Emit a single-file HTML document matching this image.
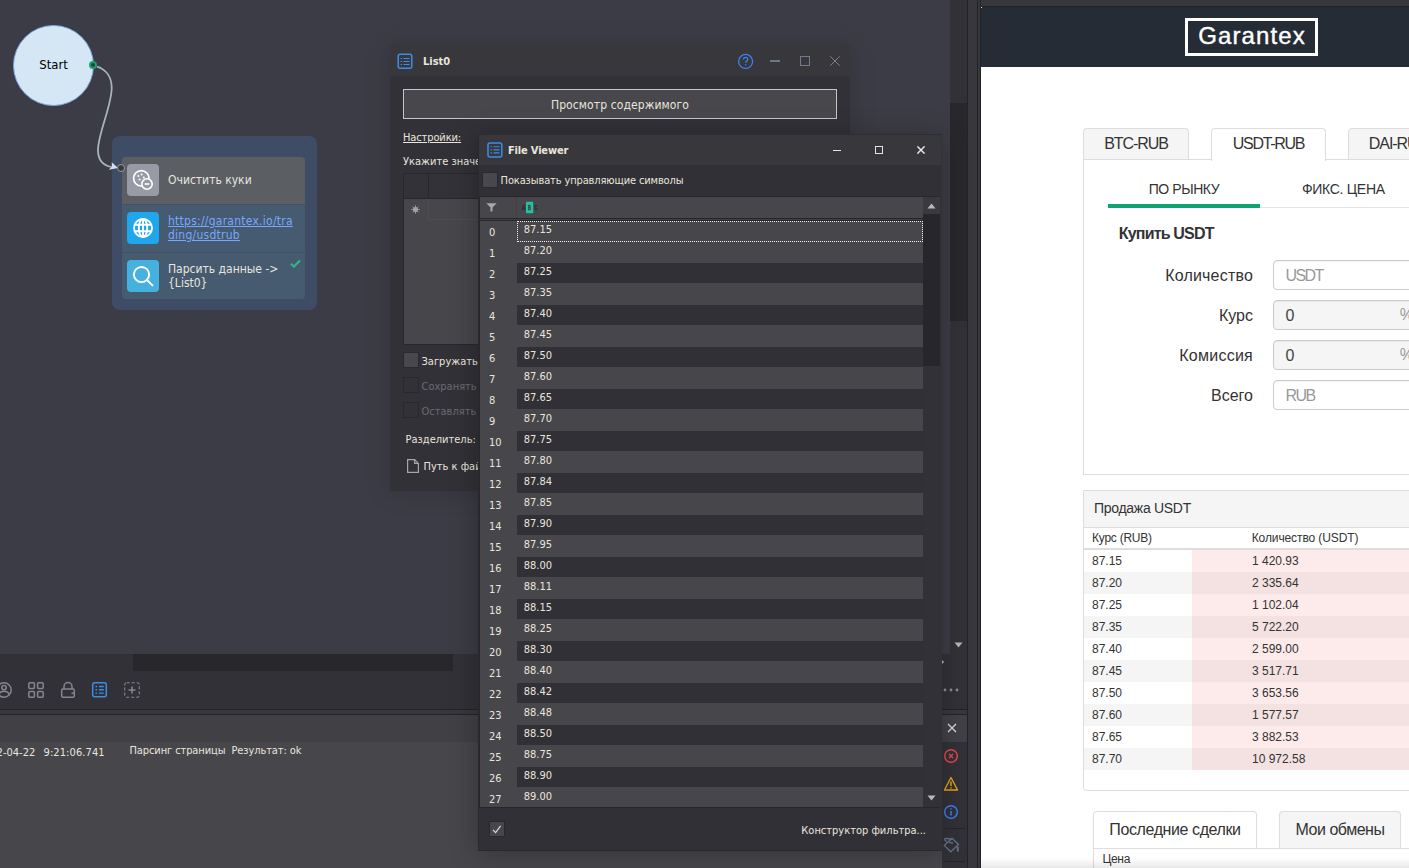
<!DOCTYPE html>
<html lang="ru"><head><meta charset="utf-8"><title>ProjectMaker</title>
<style>
*{box-sizing:border-box;margin:0;padding:0}
html,body{width:1409px;height:868px;overflow:hidden;background:#3c3c46}
body{position:relative;font-family:"DejaVu Sans Condensed","DejaVu Sans","Liberation Sans",sans-serif;font-stretch:condensed;font-size:11px;line-height:13px;color:#e9e5dd}
div,span,i,svg,a{position:absolute;display:block}
i{font-style:normal}
.t{white-space:nowrap}
/* workspace */
#start{left:13px;top:25px;width:81px;height:81px;border-radius:50%;background:#d5e6f5;border:1px solid #78a6dc;color:#000;font-size:13px;line-height:77px;text-align:center}
#gdot{left:89px;top:61px;width:8px;height:8px;border-radius:50%;border:2px solid #19a06f;background:#3a3c44}
#grp{left:111.500px;top:136.200px;width:205px;height:173.800px;border-radius:8px;background:#3e4d65}
#blk{left:122px;top:157px;width:183px;height:142px;border-radius:4px;overflow:hidden;background:#40526a}
#blk .row{left:0;width:183px;background:#465a70}
#blk .ic{left:5px;top:7px;width:32px;height:32px;border-radius:4px}
#blk .tx{left:46px;font-size:12px;line-height:13.5px;white-space:nowrap}
#port{left:117px;top:164px;width:8px;height:8px;border-radius:50%;border:1.5px solid #9c9c9c;background:#38383f}
/* bottom bars */
#tb{left:0;top:654px;width:967px;height:55px;background:#323137}
#hth{left:133px;top:654px;width:320px;height:17px;background:#28272c}
#vsb{left:950px;top:0;width:17px;height:654px;background:#323137}
#vth{left:950px;top:103px;width:17px;height:218px;background:#28272c}
#log{left:0;top:715px;width:967px;height:153px;background:#47464b}
#logh{left:0;top:0;width:942px;height:27px;background:#414045}
/* windows */
.win{background:#323137;box-shadow:0 1px 24px rgba(0,0,0,.15)}
.win .tbar{left:0;top:0;width:100%;height:31px;background:#38373c}
.win .ttl{font-weight:bold;font-size:11px;white-space:nowrap}
.cb{width:16px;height:16px;background:#48474c;border:1px solid #2a292e}
.cb.d{background:#323137;border-color:#29282d}
.dim{color:#6c6b72}
/* FV rows */
#rows{left:1px;top:87px;width:443px;height:586px;overflow:hidden;background:#47464b}
#rows .r{left:0;width:443px;height:21px}
#rows .r .n{left:9px;top:5px;white-space:nowrap}
#rows .r .c{left:37px;top:0;width:406px;height:20px;background:#313036;padding:2px 0 0 6.700px;white-space:nowrap}
#rows .r.l .c{background:#47464b}
#rows .r.f .c{height:21px;outline:1px dotted #f0f0f0;outline-offset:-1px}
/* browser */
#br{left:981px;top:7px;width:428px;height:861px;background:#fff;overflow:hidden;font-family:"Liberation Sans",sans-serif;font-stretch:normal;color:#333}
#br .tab{top:121px;height:32px;border:1px solid #ddd;border-bottom:none;border-radius:4px 4px 0 0;background:#f5f5f5;font-size:16px;line-height:30px;text-align:center;white-space:nowrap}
#br .lab{font-size:16px;line-height:20px;white-space:nowrap;text-align:right;right:156px}
#br .inp{left:292px;width:160px;height:30px;border:1px solid #ccc;border-radius:4px;background:#fff;font-size:16px;line-height:28px;padding-left:11.600px;padding-top:1px;white-space:nowrap;color:#999;box-shadow:inset 0 1px 1px rgba(0,0,0,.06)}
#br .inp.dis{background:#f5f5f5;color:#444}
#ob{left:0;top:36px;width:330px;height:260px;overflow:hidden}
#ob .or{left:0;width:330px;height:22px;background:#fff;font-size:12px;line-height:22px}
#ob .or.g{background:#f5f5f5}
#ob .or i{left:108px;top:0;width:222px;height:22px;background:rgba(235,70,70,.11)}
#ob .or .a{left:8px;top:0;white-space:nowrap}
#ob .or .b{left:168px;top:0;white-space:nowrap}
#w2{box-shadow:-2px 3px 26px rgba(0,0,0,.27)}

</style></head>
<body>
<!-- ===== workspace ===== -->
<div id="start">Start</div>
<div id="gdot"></div>
<div id="grp"></div>
<div id="blk">
  <div class="row" style="top:0;height:47px;background:#5b5f63">
    <div class="ic" style="background:#989ba5"><svg style="left:0;top:0" width="32" height="32" viewBox="0 0 32 32"><circle cx="14.300" cy="14.300" r="7.700" fill="none" stroke="#fff" stroke-width="1.700"/><circle cx="11.3" cy="12" r="1" fill="#fff"/><circle cx="14.6" cy="10.6" r="1" fill="#fff"/><circle cx="12.6" cy="15.6" r="1" fill="#fff"/><circle cx="16.8" cy="13.4" r="1" fill="#fff"/><circle cx="20" cy="20" r="5.2" fill="#989ba5" stroke="#fff" stroke-width="1.6"/><rect x="17.6" y="19.2" width="4.8" height="1.6" fill="#fff"/></svg></div>
    <span class="tx" style="top:17.200px">Очистить куки</span>
  </div>
  <div class="row" style="top:48px;height:47px">
    <div class="ic" style="background:#1fa6ec"><svg style="left:0;top:0" width="32" height="32" viewBox="0 0 32 32" fill="none" stroke="#fff" stroke-width="1.900"><circle cx="16" cy="16" r="9"/><ellipse cx="16" cy="16" rx="4.200" ry="9"/><path d="M7.600 12.800h16.800M7.600 19.200h16.800M16 7v18"/></svg></div>
    <span class="tx" style="top:10.100px;color:#76a8ff;text-decoration:underline;letter-spacing:.25px">https://garantex.io/tra<br>ding/usdtrub</span>
  </div>
  <div class="row" style="top:96px;height:46px">
    <div class="ic" style="background:#45b1de"><svg style="left:0;top:0" width="32" height="32" viewBox="0 0 32 32" fill="none" stroke="#fff" stroke-width="2" stroke-linecap="round"><circle cx="14.500" cy="14.500" r="7.600"/><path d="M20.200 20.200L25.400 25.400"/></svg></div>
    <span class="tx" style="top:10.100px">Парсить данные -&gt;<br>{List0}</span>
    <svg style="left:168px;top:6px" width="11" height="9" viewBox="0 0 11 9"><path d="M1 4.8L3.9 7.6L10 1.4" fill="none" stroke="#2fb582" stroke-width="2.2"/></svg>
  </div>
</div>
<svg id="wire" style="left:80px;top:50px" width="60" height="130" viewBox="80 50 60 130">
<path d="M97 66.600 C106 69.500 111.800 77 111.700 88 C111.600 106 98 134 98 150 C98 160 103 165.500 111.500 167" fill="none" stroke="#aab4bf" stroke-width="1.750"/>
<path d="M111.800 162.300 L118 168 L108.800 169.800 L111.800 166.600 Z" fill="#cfe1f1"/>
</svg>
<div id="port"></div>

<div id="vsb"></div><div id="vth"></div>
<svg style="left:954px;top:642px" width="9" height="6" viewBox="0 0 9 6"><path d="M0.5 0.5h8L4.5 5.5z" fill="#b4b4b8"/></svg>

<!-- ===== bottom toolbar ===== -->
<div id="tb"></div><div id="hth"></div>
<svg style="left:940px;top:658px" width="5" height="8" viewBox="0 0 5 8"><path d="M0.5 0.8L4.2 4L0.5 7.2z" fill="#b4b4b8"/></svg>
<svg id="tbi" style="left:0;top:680px" width="150" height="20" viewBox="0 0 150 20" fill="none" stroke="#85858f" stroke-width="1.5">
  <circle cx="4" cy="10" r="7.2"/><circle cx="4" cy="7.6" r="2.2"/><path d="M-1.5 15c1-3 3-3.8 5.5-3.8s4.500.8 5.500 3.800"/>
  <rect x="28.800" y="2.800" width="5.600" height="5.600" rx="1"/><rect x="37.600" y="2.800" width="5.600" height="5.600" rx="1"/><rect x="28.800" y="11.600" width="5.600" height="5.600" rx="1"/><rect x="37.600" y="11.600" width="5.600" height="5.600" rx="1"/>
  <path d="M64 9V6.500a4 4 0 0 1 8 0V9"/><rect x="61.700" y="9" width="12.600" height="8.300" rx="1.200"/><path d="M71.500 13.200h2.800"/>
  <g stroke="#3b8de8"><rect x="92.700" y="2.700" width="13.600" height="14.100" rx="2"/><path d="M95.500 6.500h1.600M99 6.500h4.800M95.500 9.800h1.600M99 9.800h4.800M95.500 13.100h1.600M99 13.100h4.800" stroke-width="1.400"/></g>
  <rect x="124.700" y="2.700" width="14.600" height="14.600" rx="2" stroke-dasharray="3 2" stroke-width="1.100"/><path d="M128.500 10h7M132 6.500v7" stroke-width="1.600"/>
</svg>
<svg style="left:943px;top:688px" width="16" height="4" viewBox="0 0 16 4" fill="#8c8c9a"><circle cx="2" cy="2" r="1.4"/><circle cx="8" cy="2" r="1.4"/><circle cx="14" cy="2" r="1.4"/></svg>
<div style="left:0;top:709px;width:967px;height:1px;background:#242328"></div>
<div style="left:0;top:710px;width:967px;height:4px;background:#38373c"></div>
<div style="left:0;top:714px;width:967px;height:1px;background:#242328"></div>

<!-- ===== log panel ===== -->
<div id="log">
  <div id="logh"></div>
  <span class="t" style="left:-3.400px;top:30.500px">2-04-22</span><span class="t" style="left:43.500px;top:30.500px;letter-spacing:.09px">9:21:06.741</span>
  <span class="t" style="left:129.500px;top:29.300px;letter-spacing:-.1px">Парсинг страницы&nbsp; Результат: ok</span>
  <div style="left:942px;top:0;width:25px;height:153px;background:#323137"></div>
  <div style="left:942px;top:0;width:25px;height:27px;background:#414046"></div>
  <svg style="left:942px;top:0" width="25" height="153" viewBox="0 0 25 153" fill="none" stroke-width="1.400">
    <path d="M6 9l8 8M14 9l-8 8" stroke="#d8d8dc" stroke-width="1.300"/>
    <g stroke="#e5484d"><circle cx="9" cy="41" r="6.300"/><path d="M7 39l4 4M11 39l-4 4"/></g>
    <g stroke="#e8a317"><path d="M9 62.500L15.500 75h-13z" stroke-linejoin="round"/><path d="M9 66.500v4.500M9 72.200v1.300" stroke-width="1.500"/></g>
    <g stroke="#3b82f6"><circle cx="9" cy="97" r="6.300"/><path d="M9 96v4.500M9 93.200v1.400" stroke-width="1.500"/></g>
    <path d="M2 113.500h21" stroke="#26252a" stroke-width="1"/>
    <g stroke="#66728c" stroke-width="1.300" stroke-linejoin="round" stroke-linecap="round"><path d="M10 123.300L16.600 129.500L8.800 136.700L2.200 130.400z"/><path d="M4.500 126.500C1.500 124.800 2.200 123.300 5 123.500C6.500 123.600 8 124 9.300 124.600"/><path d="M7.500 127.300L10.400 128"/><path d="M15.800 132.500v3.300" stroke-width="1.900"/></g>
    <path d="M2 146.500h21" stroke="#26252a" stroke-width="1"/>
  </svg>
</div>

<!-- ===== right strip ===== -->
<div style="left:967px;top:0;width:14px;height:868px;background:#38373c"></div>
<div style="left:967px;top:0;width:1px;height:868px;background:#232227"></div>
<div style="left:977px;top:0;width:1px;height:868px;background:#232227"></div>
<div style="left:980px;top:0;width:1px;height:868px;background:#232227"></div>
<div style="left:981px;top:0;width:428px;height:6px;background:#38373c"></div>
<div style="left:981px;top:6px;width:428px;height:1px;background:#232227"></div>

<!-- ===== browser ===== -->
<div id="br">
  <div style="left:0;top:0;width:428px;height:59.500px;background:#252c35"></div>
  <div style="left:204px;top:11px;width:133px;height:38px;border:3px solid #fff;color:#fff;font-size:24px;line-height:30px;text-align:center;letter-spacing:1.100px;padding-left:1px;white-space:nowrap;-webkit-text-stroke:.4px #fff">Garantex</div>
  <!-- panel 1 -->
  <div style="left:102px;top:152px;width:400px;height:316px;border:1px solid #ddd;background:#fff"></div>
  <div class="tab" style="left:102px;width:106px;height:31px;letter-spacing:-1.070px">BTC-RUB</div>
  <div class="tab" style="left:230px;width:115px;height:33px;background:#fff;letter-spacing:-1.280px">USDT-RUB</div>
  <div class="tab" style="left:367px;width:100px;height:31px;letter-spacing:-1.070px">DAI-RUB</div>
  <div style="left:127px;top:200px;width:320px;height:1px;background:#e3e3e3"></div>
  <div style="left:127px;top:197px;width:152px;height:4px;background:#0ea371"></div>
  <span class="t" style="left:167.700px;top:172.300px;font-size:14px;line-height:20px;letter-spacing:-.42px">ПО РЫНКУ</span>
  <span class="t" style="left:321px;top:172.300px;font-size:14px;line-height:20px;letter-spacing:-.3px">ФИКС. ЦЕНА</span>
  <span class="t" style="left:137.800px;top:216.600px;font-size:16px;line-height:20px;font-weight:bold;letter-spacing:-.82px">Купить USDT</span>
  <span class="lab" style="top:259px;letter-spacing:.19px">Количество</span>
  <span class="lab" style="top:299px">Курс</span>
  <span class="lab" style="top:339px;letter-spacing:.24px">Комиссия</span>
  <span class="lab" style="top:379px">Всего</span>
  <div class="inp" style="top:253px;letter-spacing:-1.600px">USDT</div>
  <div class="inp dis" style="top:293px">0</div>
  <div class="inp dis" style="top:333px">0</div>
  <div class="inp" style="top:373px;letter-spacing:-1.600px">RUB</div>
  <span class="t" style="left:418.800px;top:298px;font-size:16px;line-height:20px;color:#999">%</span>
  <span class="t" style="left:418.800px;top:338px;font-size:16px;line-height:20px;color:#999">%</span>
  <!-- panel 2 -->
  <div style="left:102px;top:483px;width:400px;height:300.500px;border:1px solid #ddd;border-radius:0 0 4px 4px;background:#fff;overflow:hidden">
    <div style="left:0;top:0;width:400px;height:37px;background:#f5f5f5;border-bottom:1px solid #ddd"></div>
    <span class="t" style="left:10px;top:7.200px;font-size:14px;line-height:20px;letter-spacing:-.29px">Продажа USDT</span>
    <span class="t" style="left:8px;top:39px;font-size:12px;line-height:16px;letter-spacing:-.24px">Курс (RUB)</span>
    <span class="t" style="left:167.700px;top:39px;font-size:12px;line-height:16px;letter-spacing:-.1px">Количество (USDT)</span>
    <div style="left:0;top:56.500px;width:400px;height:2px;background:#ddd"></div>
    <div id="ob" style="top:58.500px">
<div class="or" style="top:0px"><span class="a">87.15</span><i></i><span class="b">1 420.93</span></div>
<div class="or g" style="top:22px"><span class="a">87.20</span><i></i><span class="b">2 335.64</span></div>
<div class="or" style="top:44px"><span class="a">87.25</span><i></i><span class="b">1 102.04</span></div>
<div class="or g" style="top:66px"><span class="a">87.35</span><i></i><span class="b">5 722.20</span></div>
<div class="or" style="top:88px"><span class="a">87.40</span><i></i><span class="b">2 599.00</span></div>
<div class="or g" style="top:110px"><span class="a">87.45</span><i></i><span class="b">3 517.71</span></div>
<div class="or" style="top:132px"><span class="a">87.50</span><i></i><span class="b">3 653.56</span></div>
<div class="or g" style="top:154px"><span class="a">87.60</span><i></i><span class="b">1 577.57</span></div>
<div class="or" style="top:176px"><span class="a">87.65</span><i></i><span class="b">3 882.53</span></div>
<div class="or g" style="top:198px"><span class="a">87.70</span><i></i><span class="b">10 972.58</span></div>
    </div>
  </div>
  <!-- bottom tabs -->
  <div style="left:112px;top:841px;width:400px;height:40px;border:1px solid #ddd;background:#fff"></div>
  <div class="tab" style="left:112px;top:804px;width:164px;height:37px;line-height:35px;background:#fff;letter-spacing:-.4px">Последние сделки</div>
  <div class="tab" style="left:298px;top:804px;width:122px;height:37px;line-height:35px;letter-spacing:-.47px">Мои обмены</div>
  <span class="t" style="left:121.500px;top:843.800px;font-size:12px;line-height:16px;letter-spacing:-.34px">Цена</span>
  <div style="left:0;top:851px;width:428px;height:10px;background:linear-gradient(rgba(0,0,0,0),rgba(0,0,0,.09))"></div>
</div>

<div style="left:981px;top:7px;width:1px;height:1px;background:#e6e6e6"></div>
<!-- ===== List0 window ===== -->
<div class="win" id="w1" style="left:390px;top:45px;width:460px;height:446px">
  <div class="tbar"></div>
  <svg style="left:7px;top:8px" width="16" height="16" viewBox="0 0 16 16" fill="none" stroke="#3b8de8" stroke-width="1.500"><rect x="1.200" y="1.200" width="13.600" height="14" rx="2"/><path d="M3.600 5.500h1.500M6.500 5.500h6M3.600 8.500h1.500M6.500 8.500h6M3.600 11.500h1.500M6.500 11.500h6" stroke-width="1.100"/></svg>
  <span class="ttl" style="left:33px;top:9.700px">List0</span>
  <svg style="left:347px;top:8px" width="17" height="17" viewBox="0 0 17 17" fill="none" stroke="#3b82f6" stroke-width="1.300"><circle cx="8.600" cy="8.400" r="7"/><path d="M6.400 6.600c0-1.400 1-2.200 2.200-2.200s2.200.8 2.200 2c0 1.600-2.100 1.700-2.100 3.400"/><path d="M8.700 11.300v1.300"/></svg>
  <div style="left:380px;top:15px;width:10px;height:2px;background:#6e768a"></div>
  <div style="left:410px;top:11px;width:10px;height:10px;border:1px solid #727a8f"></div>
  <svg style="left:440px;top:11px" width="10" height="10" viewBox="0 0 10 10"><path d="M0.300 0.300l9.400 9.400M9.700 0.300L0.300 9.700" stroke="#7b8397" stroke-width="1"/></svg>
  <div style="left:13px;top:44px;width:434px;height:30px;border:1px solid #c6c6c6;background:#48474c;font-size:12px;line-height:30px;text-align:center;letter-spacing:.1px">Просмотр содержимого</div>
  <span class="t" style="left:13px;top:86.200px;text-decoration:underline;letter-spacing:-.12px">Настройки:</span>
  <span class="t" style="left:13px;top:110.300px">Укажите значения</span>
  <div style="left:13px;top:128px;width:434px;height:172px;border:1px solid #28272c;background:#47464b">
    <div style="left:0;top:0;width:432px;height:25px;background:#333238;border-bottom:1px solid #28272c"></div>
    <div style="left:24px;top:0;width:1px;height:25px;background:#28272c"></div>
    <div style="left:24px;top:25px;width:408px;height:21px;border:1px solid #4d4c52;border-top:none;border-right:none"></div>
    <svg style="left:7px;top:31px" width="9" height="9" viewBox="0 0 9 9" stroke="#9c9ca1" stroke-width=".9"><path d="M4.500 0.200v8.600M0.200 4.500h8.600M1.600 1.600l5.800 5.800M7.400 1.600L1.600 7.400"/><circle cx="4.500" cy="4.500" r="2.500" fill="#a3a3a8" stroke="none"/></svg>
  </div>
  <div class="cb" style="left:13px;top:307px"></div><span class="t" style="left:31.500px;top:309.700px">Загружать</span>
  <div class="cb d" style="left:13px;top:332px"></div><span class="t dim" style="left:31.500px;top:335.200px">Сохранять</span>
  <div class="cb d" style="left:13px;top:357px"></div><span class="t dim" style="left:31.500px;top:360px">Оставлять</span>
  <span class="t" style="left:15.500px;top:388.200px">Разделитель:</span>
  <svg style="left:16px;top:413px" width="14" height="16" viewBox="0 0 14 16" fill="none" stroke="#a5a5aa" stroke-width="1.200"><path d="M1.600 1.600h7l3.800 3.800v9h-10.800z"/><path d="M8.600 1.600v3.800h3.800"/></svg>
  <span class="t" style="left:33.500px;top:415px">Путь к файлу</span>
</div>

<!-- ===== File Viewer window ===== -->
<div class="win" id="w2" style="left:479px;top:134px;width:463px;height:716px;background:#313036">
  <div class="tbar" style="left:-1px;width:464px"></div>

  <svg style="left:8px;top:8px" width="16" height="16" viewBox="0 0 16 16" fill="none" stroke="#3b8de8" stroke-width="1.500"><rect x="1" y="1" width="13.800" height="14" rx="2"/><path d="M3.600 4.800h1.500M6.500 4.800h6M3.600 7.900h1.500M6.500 7.900h6M3.600 10.900h1.500M6.500 10.900h6" stroke-width="1.100"/></svg>
  <span class="ttl" style="left:29px;top:9.700px;letter-spacing:-.17px">File Viewer</span>
  <div style="left:354px;top:15.500px;width:8px;height:1.500px;background:#e4e4e6"></div>
  <div style="left:396px;top:12px;width:8px;height:8px;border:1.200px solid #e4e4e6"></div>
  <svg style="left:438px;top:12px" width="8" height="8" viewBox="0 0 8 8"><path d="M0.400 0.400l7.200 7.200M7.600 0.400l-7.200 7.200" stroke="#ececee" stroke-width="1.400"/></svg>
  <div class="cb" style="left:3px;top:38px"></div>
  <span class="t" style="left:21.600px;top:39.700px;letter-spacing:-.13px">Показывать управляющие символы</span>
  <!-- grid -->
  <div style="left:0;top:62px;width:461px;height:612px;background:#27262b"></div>
  <div style="left:1px;top:63px;width:443px;height:21px;background:#47464b"></div>
  <div style="left:37px;top:63px;width:1px;height:21px;background:#414045"></div>
  <svg style="left:7px;top:68.500px" width="11" height="9" viewBox="0 0 11 9"><path d="M0.300 0.300h10.400L6.500 4.600V8.500h-2V4.600z" fill="#a9a9ac"/></svg>
  <svg style="left:42px;top:67px" width="18" height="13" viewBox="0 0 18 13"><rect x="5" y="0.800" width="7.200" height="11.400" rx=".6" fill="#25c0a0"/><text x="0.900" y="9.100" font-family="Liberation Mono,monospace" font-size="7.600" font-weight="bold" fill="#27323f" stroke="#27323f" stroke-width=".5" textLength="2.900" lengthAdjust="spacingAndGlyphs">A</text><text x="7.100" y="9.100" font-family="Liberation Mono,monospace" font-size="7.600" font-weight="bold" fill="#40393f" stroke="#40393f" stroke-width=".3" textLength="2.900" lengthAdjust="spacingAndGlyphs">B</text><text x="13.200" y="9.100" font-family="Liberation Mono,monospace" font-size="7.600" font-weight="bold" fill="#27323f" stroke="#27323f" stroke-width=".5" textLength="2.900" lengthAdjust="spacingAndGlyphs">C</text></svg>
  <div style="left:1px;top:85px;width:443px;height:1px;background:#403f44"></div>
  <div id="rows">
<div class="r l f" style="top:0px"><span class="n">0</span><span class="c">87.15</span></div>
<div class="r l" style="top:21px"><span class="n">1</span><span class="c">87.20</span></div>
<div class="r" style="top:42px"><span class="n">2</span><span class="c">87.25</span></div>
<div class="r l" style="top:63px"><span class="n">3</span><span class="c">87.35</span></div>
<div class="r" style="top:84px"><span class="n">4</span><span class="c">87.40</span></div>
<div class="r l" style="top:105px"><span class="n">5</span><span class="c">87.45</span></div>
<div class="r" style="top:126px"><span class="n">6</span><span class="c">87.50</span></div>
<div class="r l" style="top:147px"><span class="n">7</span><span class="c">87.60</span></div>
<div class="r" style="top:168px"><span class="n">8</span><span class="c">87.65</span></div>
<div class="r l" style="top:189px"><span class="n">9</span><span class="c">87.70</span></div>
<div class="r" style="top:210px"><span class="n">10</span><span class="c">87.75</span></div>
<div class="r l" style="top:231px"><span class="n">11</span><span class="c">87.80</span></div>
<div class="r" style="top:252px"><span class="n">12</span><span class="c">87.84</span></div>
<div class="r l" style="top:273px"><span class="n">13</span><span class="c">87.85</span></div>
<div class="r" style="top:294px"><span class="n">14</span><span class="c">87.90</span></div>
<div class="r l" style="top:315px"><span class="n">15</span><span class="c">87.95</span></div>
<div class="r" style="top:336px"><span class="n">16</span><span class="c">88.00</span></div>
<div class="r l" style="top:357px"><span class="n">17</span><span class="c">88.11</span></div>
<div class="r" style="top:378px"><span class="n">18</span><span class="c">88.15</span></div>
<div class="r l" style="top:399px"><span class="n">19</span><span class="c">88.25</span></div>
<div class="r" style="top:420px"><span class="n">20</span><span class="c">88.30</span></div>
<div class="r l" style="top:441px"><span class="n">21</span><span class="c">88.40</span></div>
<div class="r" style="top:462px"><span class="n">22</span><span class="c">88.42</span></div>
<div class="r l" style="top:483px"><span class="n">23</span><span class="c">88.48</span></div>
<div class="r" style="top:504px"><span class="n">24</span><span class="c">88.50</span></div>
<div class="r l" style="top:525px"><span class="n">25</span><span class="c">88.75</span></div>
<div class="r" style="top:546px"><span class="n">26</span><span class="c">88.90</span></div>
<div class="r l" style="top:567px"><span class="n">27</span><span class="c">89.00</span></div>
  </div>
  <!-- scrollbar -->
  <div style="left:444px;top:63px;width:17px;height:610px;background:#323137"></div>
  <div style="left:444px;top:63px;width:17px;height:17px;background:#3a393e"></div>
  <div style="left:444px;top:80px;width:17px;height:152px;background:#27262b"></div>
  <svg style="left:448px;top:69px" width="9" height="6" viewBox="0 0 9 6"><path d="M0.500 5.500h8L4.500 0.500z" fill="#b9b9bc"/></svg>
  <svg style="left:448px;top:661px" width="9" height="6" viewBox="0 0 9 6"><path d="M0.500 0.500h8L4.500 5.500z" fill="#b9b9bc"/></svg>
  <!-- footer -->
  <div style="left:10px;top:687px;width:16px;height:16px;background:#47464b;border:1px solid #29282d"></div>
  <svg style="left:13px;top:690.500px" width="10" height="9" viewBox="0 0 10 9"><path d="M1 4.800L3.600 7.600L8.600 0.800" fill="none" stroke="#dcdcdc" stroke-width="1.200"/></svg>
  <span class="t" style="right:16px;top:689.900px">Конструктор фильтра...</span>
  <div style="left:-1px;top:0;width:464px;height:716.500px;border:1px solid #2a292e;border-top-color:#2e2d32;border-right-color:#333237"></div>
</div>

</body></html>
